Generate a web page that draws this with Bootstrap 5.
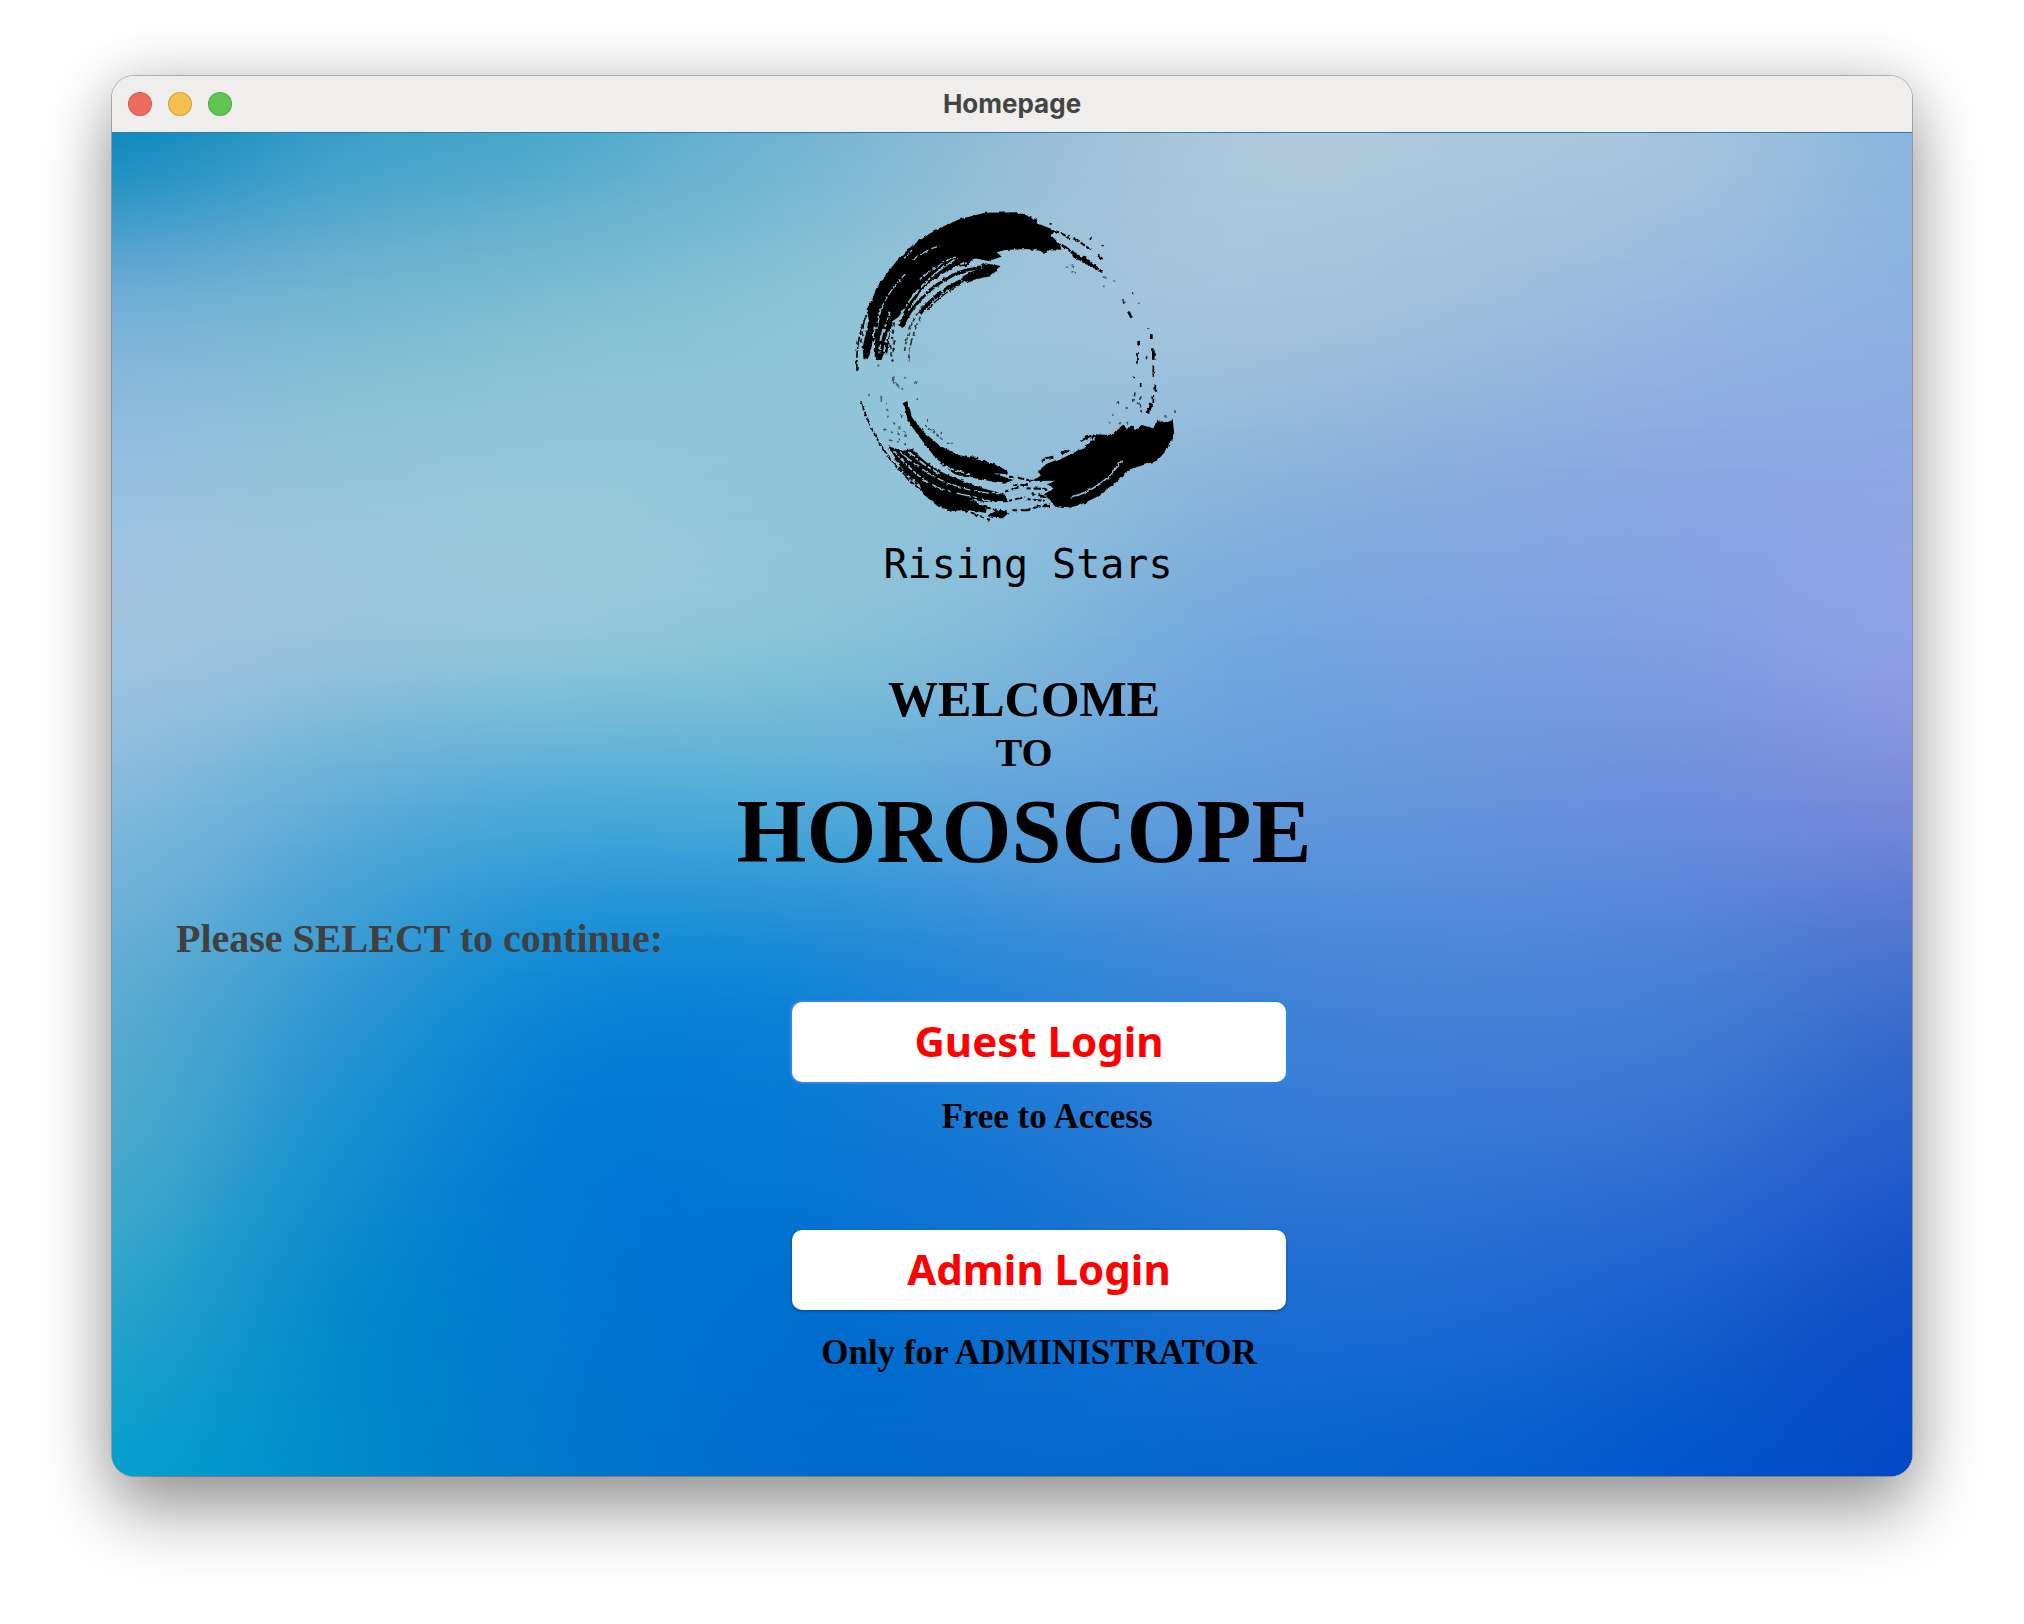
<!DOCTYPE html>
<html lang="en">
<head>
<meta charset="utf-8">
<meta name="viewport" content="width=device-width, initial-scale=1">
<title>Homepage</title>
<link rel="stylesheet" href="https://cdn.jsdelivr.net/npm/bootstrap@5.3.0/dist/css/bootstrap.min.css">
<style>
  body { background: #fff; padding: 76px 112px 148px; }
  .app-window { border-radius: 22px; box-shadow: 0 0 0 1px rgba(0,0,0,.24), 0 0 60px rgba(0,0,0,.16), 0 36px 70px rgba(0,0,0,.36); }
  .title-bar { height: 57px; background: #f0eeec; border-bottom: 1px solid #2a7da5; padding: 0 16px; font-family: Inter, sans-serif; }
  .title-bar h1 { font-size: 26px; line-height: 32px; font-weight: 700; color: #444; }
  .dot { width: 24px; height: 24px; border-radius: 50%; border: 1px solid rgba(0,0,0,.16); padding: 0; }
  .dot-close { background: #ed6a5e; }
  .dot-min { background: #f5bf4f; }
  .dot-zoom { background: #61c554; }
  .title-bar .controls { gap: 16px; width: 120px; }
  .scene { padding: 62px 0 98px; font-family: "Liberation Serif", serif; font-weight: 700; color: #000; isolation: isolate; }
  .backdrop { z-index: -1; }
  .backdrop div { position: absolute; inset: 0; }
  .brand { padding-left: 32px; }
  .brand svg { width: 376px; height: 345px; }
  .brand-name { font: 400 40px/48px "DejaVu Sans Mono", monospace; }
  .hero { padding: 83px 0 0 24px; }
  .hero h2, .hero p { font-weight: 700; margin: 0; }
  .hero-welcome { font-size: 50px; line-height: 56px; }
  .hero-to { font-size: 40px; line-height: 44px; }
  .hero-name { font-size: 90px; line-height: 100px; padding-top: 7px; }
  .prompt { font-size: 40px; line-height: 44px; color: #404040; padding: 35px 64px 41px; margin: 0; }
  .choices { padding-left: 54px; gap: 93px; }
  .login-btn { width: 494px; height: 80px; border-radius: 10px; background: #fff; color: #f00; border: 0; font: 700 42px/56px "Noto Sans", sans-serif; box-shadow: 0 1px 3px rgba(0,0,0,.4); padding: 0 0 2px; }
  .login-btn:hover { background: #fff; color: #f00; }
  .login-primary { box-shadow: 0 0 0 2px #2f86e4; }
  .login-note { font-size: 35px; line-height: 40px; margin: 15px 0 0; }
</style>
<script src="https://cdn.jsdelivr.net/npm/bootstrap@5.3.0/dist/js/bootstrap.bundle.min.js"></script>
</head>
<body class="min-vh-100 d-flex flex-column">
<main class="app-window flex-fill d-flex flex-column overflow-hidden">
  <header class="title-bar d-flex align-items-center justify-content-between">
    <div class="controls d-flex">
      <button class="dot dot-close" aria-label="Close"></button>
      <button class="dot dot-min" aria-label="Minimize"></button>
      <button class="dot dot-zoom" aria-label="Zoom"></button>
    </div>
    <h1 class="m-0">Homepage</h1>
    <div class="controls"></div>
  </header>

  <section class="scene position-relative flex-fill overflow-hidden">
    <div class="backdrop position-absolute top-0 start-0 w-100 h-100" id="backdrop" aria-hidden="true"></div>

    <div class="brand d-flex flex-column align-items-center">
      <svg viewBox="0 0 1128 1035" role="img" aria-label="Brush circle">
        <defs>
          <filter id="rough" x="-5%" y="-5%" width="110%" height="110%">
            <feTurbulence type="fractalNoise" baseFrequency=".07" numOctaves="2" seed="4"/>
            <feDisplacementMap in="SourceGraphic" scale="10" xChannelSelector="R" yChannelSelector="G"/>
          </filter>
          <mask id="dry" maskUnits="userSpaceOnUse" x="0" y="0" width="1128" height="1035">
            <rect width="1128" height="1035" fill="#fff"/>
            <g fill="none" stroke="#000" stroke-width="4">
              <path d="M116 358Q145 285 196 238M122 345l-12 60" stroke-dasharray="40 5 14 6"/>
              <path d="M218 195Q255 165 300 152" stroke-dasharray="18 8 30 10"/>
              <path d="M192 190l26-26" stroke-dasharray="8 5"/>
              <path d="M180 365Q230 265 350 190" stroke-width="5" stroke-dasharray="30 5 8 6 50 6"/>
              <path d="M205 350Q250 270 380 200" stroke-width="5" stroke-dasharray="50 6 12 4"/>
              <path d="M240 255Q285 210 345 186" stroke-dasharray="12 4 26 7"/>
              <path d="M104 395l-6 70M130 405q-12 30-12 70M146 410l-14 60" stroke-width="6" stroke-dasharray="34 8 20 4"/>
              <path d="M150 350l-20 60" stroke-dasharray="12 6"/>
              <path d="M692 906Q785 885 845 797" stroke-width="5"/>
              <path d="M720 765l45-38M715 745l38-24" stroke-dasharray="18 4"/>
              <path d="M180 770Q265 845 335 868Q420 900 500 895" stroke-dasharray="45 8 20 12"/>
              <path d="M220 758Q300 850 415 855L520 880" stroke-width="9" stroke-dasharray="65 5 30 6"/>
              <path d="M160 765Q215 830 262 862" stroke-width="5" stroke-dasharray="16 5 8 4"/>
              <path d="M205 768Q250 812 300 836" stroke-width="5" stroke-dasharray="24 6 10 5"/>
              <path d="M250 855Q310 890 400 905L500 932" stroke-width="4" stroke-dasharray="14 16 40 8"/>
              <path d="M235 745Q280 790 320 818L390 838" stroke-width="5" stroke-dasharray="30 5"/>
            </g>
          </mask>
        </defs>
        <g filter="url(#rough)">
          <g mask="url(#dry)">
            <path d="M70 488L68 455L78 415L86 372L80 342L96 316L108 282L130 248L170 198L215 153L285 105L360 72L435 53L530 52L560 62L592 74L590 84L625 98L646 106L634 122L660 148L664 164L630 163L615 177L600 167L560 162L495 165L470 172L485 185L445 198L405 190L380 213L345 215L285 250L240 292L205 356L185 398L178 390L195 350L170 370L158 378L150 415L142 475L132 475L124 496L112 496L104 486L106 430L95 455L84 492Z"/>
            <path d="M188 625L202 618L215 662L250 710L300 752L350 778L430 798L500 825L505 838L460 835L520 855L490 866L400 850L350 842L295 800L245 735L205 680Z"/>
            <path d="M145 754L190 768L215 762L255 795L330 842L410 874L498 900L502 922L430 920L390 912L440 938L438 954L380 944L340 948L295 935L250 898L238 868L205 840L180 812Z"/>
            <path d="M440 962L468 948L508 952L488 970L455 968Z"/>
            <path d="M580 858L604 840L592 830L620 806L650 798L700 774L745 748L760 718L815 720L835 700L852 690L862 706L875 688L885 706L905 690L940 700L952 674L974 682L998 672L1003 720L978 768L950 798L870 823L825 865L770 906L720 930L680 940L645 935L630 914L612 898L638 882L624 868L645 857Z"/>
            <path d="M660 774l16-10 14 5-20 9z"/>
          </g>
          <g fill="none" stroke="#000">
            <path d="M188 395Q205 345 270 285Q350 225 398 222L440 210L472 216L445 240L380 254" stroke-width="9" stroke-dasharray="120 4 60 3"/>
            <path d="M372 255Q420 226 470 218" stroke-width="22"/>
            <path d="M240 355Q290 288 380 250" stroke-width="11" stroke-dasharray="60 3 30 4"/>
            <path d="M262 345Q300 300 370 262" stroke-width="4" stroke-dasharray="24 5"/>
            <path d="M194 468Q205 380 258 322" stroke-width="5" stroke-dasharray="12 8 20 6" opacity=".7"/>
            <path d="M206 500Q208 430 245 358" stroke-width="5" stroke-dasharray="22 9 12 6" opacity=".7"/>
            <path d="M51 528Q48 455 62 412L84 345" stroke-width="5" stroke-dasharray="34 8 22 5"/>
            <path d="M62 445L72 380" stroke-width="4" stroke-dasharray="14 8"/>
            <path d="M162 382l-6 50M164 436l-4 34M150 450l8 50M178 378l18-8" stroke-width="7" stroke-dasharray="13 9" opacity=".8"/>
            <path d="M112 512h8M158 546v20M165 562l12 15M183 578l6 6M195 545v6M225 562l6 4M124 604v16M87 598v6" stroke-width="5" opacity=".5"/>
            <path d="M62 622L78 660Q95 710 145 785Q190 845 242 884L335 948" stroke-width="5" stroke-dasharray="26 5 14 5"/>
            <path d="M138 620l8 60M160 680l45 42M132 705l70 20M150 735l60 14M175 710l5 36M185 660v8" stroke-width="4" stroke-dasharray="8 13" opacity=".6"/>
            <path d="M165 790L210 840M178 818L232 868M244 880L310 940" stroke-width="6" stroke-dasharray="14 7"/>
            <path d="M260 672v8M232 610v5M255 690l28 25M278 705l30 30M304 710v8M318 745h20" stroke-width="4" stroke-dasharray="10 6" opacity=".6"/>
            <path d="M390 787l25 2M402 798h34M440 804l30 8" stroke-width="6"/>
            <path d="M375 945L450 975M410 930L510 955M520 946h46M505 918l50-12M495 890l45-14M510 845l70 12M520 870h50M575 895l55 14M560 912l55 6M560 944l70-18M590 935l40-2M570 860l60-20M560 880l70 2" stroke-width="6" stroke-dasharray="12 9 22 7"/>
            <path d="M640 106l22 8 28 16M700 130l24 14 30 22M632 84v5M752 125v8M788 150v4M774 182l14 10" stroke-width="6" stroke-dasharray="18 5"/>
            <path d="M665 150L710 180L790 232" stroke-width="8" stroke-dasharray="30 5 60 3"/>
            <path d="M700 182L772 222M728 185l54 44" stroke-width="9" stroke-dasharray="26 4"/>
            <path d="M692 210l12 6M694 230l14 4M680 216h5M788 245l15 5M788 274h6M820 258h6" stroke-width="5" opacity=".5"/>
            <path d="M848 312l4 12M878 291v7M896 322v4M926 400v4" stroke-width="5" opacity=".7"/>
            <path d="M865 350l10 18M934 418v14M896 438v14M940 460v34" stroke-width="8"/>
            <path d="M891 472v34M920 484v6M940 512v30M880 544v6M902 564v12M946 570v20M940 600v24" stroke-width="5"/>
            <path d="M885 592l-5 40M904 604l-12 24M900 625l4 28M832 622v5M860 636v6" stroke-width="5" stroke-dasharray="12 8" opacity=".7"/>
            <path d="M934 625L922 655" stroke-width="12"/>
            <path d="M1005 646v8M976 660v8M818 658v4M806 684h5M838 688l4-6M862 680v6" stroke-width="5" opacity=".6"/>
            <path d="M606 798l10-8 24-5M628 806l22-8M722 738l30-16M735 728l20-5" stroke-width="6"/>
          </g>
        </g>
      </svg>
      <div class="brand-name">Rising Stars</div>
    </div>

    <div class="hero text-center">
      <p class="hero-welcome">WELCOME</p>
      <p class="hero-to pt-1">TO</p>
      <h2 class="hero-name">HOROSCOPE</h2>
    </div>

    <p class="prompt">Please SELECT to continue:</p>

    <div class="choices d-flex flex-column align-items-center">
      <div class="text-center">
        <button type="button" class="btn login-btn login-primary" aria-describedby="guest-note">Guest Login</button>
        <p class="login-note ps-3" id="guest-note">Free to Access</p>
      </div>
      <div class="text-center">
        <button type="button" class="btn login-btn" aria-describedby="admin-note">Admin Login</button>
        <p class="login-note pt-2" id="admin-note">Only for ADMINISTRATOR</p>
      </div>
    </div>
  </section>
</main>
<script>
  // Colour mesh: a 9x9 grid of colours, smoothed to a finer grid, then drawn
  // as horizontal gradients that each fade in over the row above.
  const mesh = [
    '0f8abf 3a9ec8 4ea9cb 72b4d3 94bdd6 aec8dc adc8dc a5c4dd 8ab6de',
    '72aed6 75b6d2 7fbdd3 8ac2d6 9bc4da a6c4dc 9fbfdd 96b7e1 8cb2e1',
    '95bfe0 92c4d8 93c7d7 90c5d7 92c0da 8cb6dc 8aaede 8ba9e2 8ea8e4',
    'a0c4e0 98c3dc 92c6d9 8ac3d8 82b9db 74a8dd 7aa2e0 809fe1 8fa1e5',
    '83b9dd 61aed7 4daad8 50abd7 5ea3da 629bdb 6694dc 6c8edd 788ada',
    '5fadd1 369ad3 128ad5 1486d6 2c87d8 4086d8 4b85d8 4b80d6 4671ce',
    '4aaacb 1a90d0 027cd3 0879d3 1a78d4 2f7ad5 3478d5 3371d2 265fca',
    '28a3cb 058acb 0079d0 006fcf 0b6fd0 1a6ed1 1d6ad1 175fcd 0f4fc8',
    '069fce 008bcb 0078cb 006ccb 036acc 0665ce 0560d0 0356cd 0348c6'
  ].map(row => row.split(' ').map(hex => [0, 2, 4].map(k => parseInt(hex.slice(k, k + 2), 16))));

  // Catmull-Rom interpolation over a list, `steps` points for each interval
  function refine(list, mix, steps) {
    const at = k => list[Math.min(Math.max(k, 0), list.length - 1)];
    const out = [];
    for (let i = 0; i < list.length - 1; i++) {
      for (let s = 0; s < steps; s++) {
        const t = s / steps;
        const w = [(-t + 2*t*t - t*t*t) / 2, (2 - 5*t*t + 3*t*t*t) / 2, (t + 4*t*t - 3*t*t*t) / 2, (-t*t + t*t*t) / 2];
        out.push(mix([at(i - 1), at(i), at(i + 1), at(i + 2)], w));
      }
    }
    out.push(at(list.length - 1));
    return out;
  }
  const mixColour = (c, w) => [0, 1, 2].map(k => Math.min(255, Math.max(0, c.reduce((sum, v, j) => sum + v[k] * w[j], 0))));
  const mixRow = (rows, w) => rows[0].map((_, x) => mixColour(rows.map(r => r[x]), w));
  const fine = refine(mesh.map(row => refine(row, mixColour, 4)), mixRow, 4);

  const backdrop = document.getElementById('backdrop');
  const step = 100 / (fine.length - 1);
  fine.forEach((row, i) => {
    const layer = document.createElement('div');
    layer.style.background = `linear-gradient(90deg, ${row.map(c => `rgb(${c.map(Math.round).join(',')})`).join(', ')})`;
    if (i) {
      const fade = `linear-gradient(transparent ${(i - 1) * step}%, #000 ${i * step}%)`;
      layer.style.webkitMaskImage = fade;
      layer.style.maskImage = fade;
    }
    backdrop.append(layer);
  });
</script>
</body>
</html>
